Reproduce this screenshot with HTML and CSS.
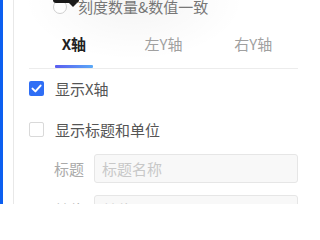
FILE: index.html
```html
<!DOCTYPE html>
<html lang="zh-CN">
<head>
<meta charset="utf-8">
<link rel="stylesheet" href="styles.css">
</head>
<body>
<div class="frame">
  <div class="accent"></div>
  <div class="gutter"></div>
  <div class="panel">
    <div class="radio-row">
      <span class="radio"></span>
      <span class="radio-label">刻度数量&amp;数值一致</span>
    </div>
    <div class="tabs">
      <div class="tab active">X轴</div>
      <div class="tab">左Y轴</div>
      <div class="tab">右Y轴</div>
    </div>
    <div class="check-row first">
      <svg class="check" width="15" height="15" viewBox="0 0 15 15"><rect x="0" y="0" width="15" height="15" rx="2" fill="#2f6ef5"/><path d="M3.5 7.6 L6.4 10.4 L11.6 4.6" fill="none" stroke="#fff" stroke-width="2" stroke-linecap="round" stroke-linejoin="round"/></svg>
      <span class="check-label">显示X轴</span>
    </div>
    <div class="check-row second">
      <span class="box"></span>
      <span class="check-label">显示标题和单位</span>
    </div>
    <div class="field-row title-row">
      <span class="field-label">标题</span>
      <div class="input">标题名称</div>
    </div>
    <div class="field-row unit-row">
      <span class="field-label">单位</span>
      <div class="input">单位</div>
    </div>
  </div>
  <div class="tooltip"></div>
</div>
</body>
</html>
```
FILE: styles.css
```css
* { box-sizing: border-box; }
html, body { margin: 0; padding: 0; background: #fff; overflow: hidden; }
body {
  font-family: "Noto Sans CJK SC", "Noto Sans", sans-serif;
  font-size: 15px;
  width: 300px;
  height: 204px;
}
.frame {
  position: relative;
  display: flex;
  height: 204px;
  width: 300px;
}
.accent { width: 3px; background: #0c5ff0; flex: none; }
.gutter { width: 11px; background: #fff; border-right: 1px solid #e8e8e8; flex: none; }
.panel {
  flex: 1;
  padding: 0 2px 0 15px;
  background: radial-gradient(ellipse 110px 60px at 120px 0px, rgba(0,0,0,0.045), rgba(0,0,0,0));
}
.radio-row {
  display: flex;
  align-items: center;
  height: 14px;
  padding-left: 24px;
}
.radio {
  width: 14px; height: 14px;
  border: 1px solid #cfcfcf;
  border-radius: 50%;
  background: #fff;
  flex: none;
  margin-right: 11px;
}
.radio-label { color: #777; line-height: 14px; white-space: nowrap; }
.tabs {
  display: flex;
  border-bottom: 1px solid #ececec;
}
.tab {
  flex: 1;
  height: 54px;
  padding-top: 21px;
  text-align: center;
  line-height: 18px;
  color: #a0a0a0;
  position: relative;
}
.tab.active { color: #222; font-weight: 700; }
.tab.active::after {
  content: "";
  position: absolute;
  left: 50%;
  bottom: 0;
  width: 38px;
  margin-left: -19px;
  height: 3px;
  border-radius: 1px;
  background: linear-gradient(90deg, #5a5cf0, #5aa9f7);
}
.check-row {
  display: flex;
  align-items: center;
  height: 15px;
}
.check-row.first { margin-top: 12px; }
.check-row.second { margin-top: 26px; }
.check { flex: none; margin-right: 11px; }
.box {
  width: 15px; height: 15px;
  border: 1px solid #d9d9d9;
  border-radius: 2px;
  background: #fff;
  flex: none;
  margin-right: 11px;
}
.check-label { color: #555; line-height: 15px; white-space: nowrap; }
.field-row {
  display: flex;
  align-items: center;
  padding-left: 25px;
}
.title-row { margin-top: 17px; }
.unit-row { margin-top: 12px; }
.field-label { color: #aaa; width: 40px; flex: none; }
.input {
  flex: 1;
  height: 29px;
  border: 1px solid #e6e6e6;
  border-radius: 3px;
  background: #f8f8f8;
  color: #c8c8c8;
  padding-left: 7px;
  line-height: 27px;
}
.tooltip {
  position: absolute;
  left: 53px;
  top: -20px;
  width: 26px;
  height: 23px;
  background: #1a1a1a;
  border-radius: 3px;
}
.tooltip::after {
  content: "";
  position: absolute;
  left: 16px;
  top: 23px;
  border-left: 4px solid transparent;
  border-right: 4px solid transparent;
  border-top: 4px solid #1a1a1a;
}
```
